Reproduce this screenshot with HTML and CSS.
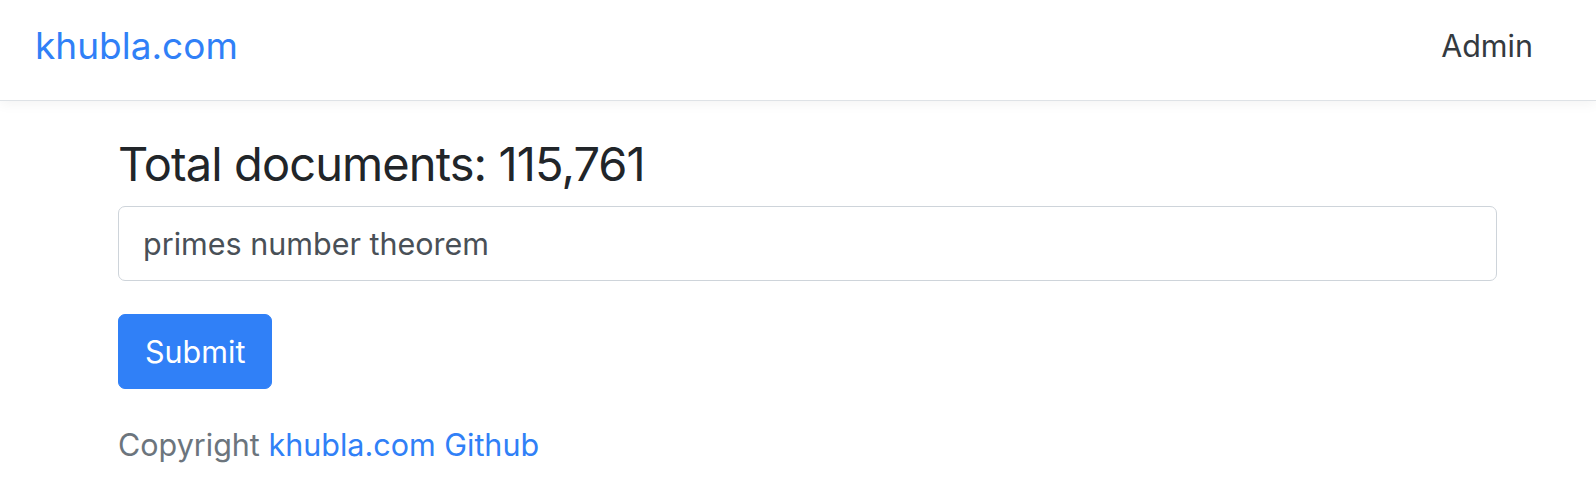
FILE: index.html
```html
<!DOCTYPE html>
<html lang="en">
<head>
<meta charset="utf-8">
<title>khubla.com</title>
<link rel="stylesheet" href="styles.css">
</head>
<body>
<nav class="navbar">
  <a class="brand" href="#">khubla.com</a>
  <a class="nav-link" href="#">Admin</a>
</nav>
<main class="container">
  <h3 class="title">Total documents: 115,761</h3>
  <form class="search">
    <input class="form-control" type="text" value="primes number theorem">
    <button class="btn" type="button">Submit</button>
  </form>
  <p class="footer">Copyright <a href="#">khubla.com</a> <a href="#">Github</a></p>
</main>
</body>
</html>
```

FILE: styles.css
```css
* { box-sizing: border-box; }
html, body { margin: 0; padding: 0; background: #fff; }
body {
  font-family: Inter, "Noto Sans", "Liberation Sans", sans-serif;
  font-size: 30.5px;
  line-height: 1.5;
  color: #212529;
}
a { text-decoration: none; color: #3080f7; }

.navbar {
  height: 101px;
  display: flex;
  align-items: center;
  justify-content: space-between;
  padding: 0 63px 9px 35px;
  border-bottom: 1px solid #dee2e6;
  box-shadow: 0 3px 12px rgba(0,0,0,0.05);
  background: #fff;
}
.brand {
  font-size: 37px;
  line-height: 1.5;
  color: #3080f7;
}
.nav-link {
  font-size: 30.5px;
  color: #343a40;
}

.container {
  padding: 0 99px 0 118px;
}
.title {
  margin: 35px 0 14px;
  font-size: 47px;
  font-weight: 400;
  letter-spacing: -0.9px;
  line-height: 1.2;
}
.search {
  display: flex;
  flex-direction: column;
  align-items: flex-start;
  gap: 33px;
}
.form-control {
  width: 100%;
  height: 75px;
  padding: 0 24px;
  font-family: inherit;
  font-size: 30.5px;
  color: #495057;
  border: 1px solid #ced4da;
  border-radius: 7px;
  background: #fff;
  outline: none;
}
.btn {
  height: 75px;
  padding: 0 26px;
  font-family: inherit;
  font-size: 30.5px;
  color: #fff;
  background: #3080f7;
  border: 1px solid #3080f7;
  border-radius: 7px;
}
.footer {
  margin: 33px 0 0;
  color: #6c757d;
}
```
